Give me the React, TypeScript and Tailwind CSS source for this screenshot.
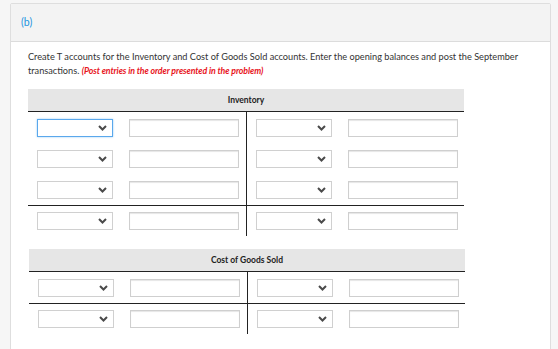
import React from 'react'

function Chevron() {
  return (
    <svg width="9" height="6" viewBox="0 0 9 6" className="shrink-0">
      <polyline points="1,1 4.5,4.5 8,1" fill="none" stroke="#4a4a4a" strokeWidth="2" strokeLinejoin="miter" />
    </svg>
  )
}

function Select({ focused }: { focused?: boolean }) {
  return (
    <div
      className={`h-[18px] w-[76px] flex items-center justify-end pr-[5px] bg-white ${
        focused ? 'border border-[#5aa8ec] shadow-[0_0_2px_#9ccdf5]' : 'border border-[#d0d0d0]'
      }`}
    >
      <Chevron />
    </div>
  )
}

function Field() {
  return <div className="h-[18px] w-[110px] border border-[#cfcfcf] bg-white shadow-[inset_0_1px_1px_#e6e6e6]" />
}

function Side({ focused, right }: { focused?: boolean; right?: boolean }) {
  return (
    <div className={`flex-1 flex items-center pl-[9px] gap-[16px] ${right ? '' : 'border-r-[1.5px] border-[#222]'}`}>
      <Select focused={focused} />
      <Field />
    </div>
  )
}

function Row({ first, topLine }: { first?: boolean; topLine?: boolean }) {
  return (
    <div className={`flex h-[31px] ${topLine ? 'border-t-[1.5px] border-[#222]' : ''}`}>
      <Side focused={first} />
      <Side right />
    </div>
  )
}

function TAccount({ title, rows, split, focusFirst }: { title: string; rows: number; split: number; focusFirst?: boolean }) {
  return (
    <div className="w-[436px]">
      <div className="h-[23px] bg-[#e6e6e6] border-b-[1.5px] border-[#222] flex items-center justify-center text-[8.5px] font-bold text-[#222]">
        {title}
      </div>
      {Array.from({ length: rows }).map((_, i) => (
        <Row key={i} first={focusFirst && i === 0} topLine={i === split} />
      ))}
    </div>
  )
}

export default function App() {
  return (
    <div className="min-h-screen bg-[#f6f6f6] pt-[3px] pl-[10px] pr-[7px] font-['Lato','Liberation_Sans',sans-serif]">
      <div className="border border-[#dedede] bg-white rounded-[2px] min-h-[400px]">
        <div className="h-[38px] bg-[#f3f3f3] border-b border-[#dcdcdc] flex items-center pl-[10px] text-[10.5px] text-[#1c93e0]">
          (b)
        </div>
        <div className="pl-[17px] pt-[8px]">
          <p className="text-[9.2px] leading-[14px] text-[#333] w-[500px]">
            Create T accounts for the Inventory and Cost of Goods Sold accounts. Enter the opening balances and post the September
            transactions.{' '}
            <span className="text-[8.8px] tracking-[-0.1px] text-[#e8141c] italic font-bold">(Post entries in the order presented in the problem)</span>
          </p>
          <div className="mt-[11px]">
            <TAccount title="Inventory" rows={4} split={3} focusFirst />
          </div>
          <div className="mt-[13px] ml-[1px]">
            <TAccount title="Cost of Goods Sold" rows={2} split={1} />
          </div>
        </div>
      </div>
    </div>
  )
}
